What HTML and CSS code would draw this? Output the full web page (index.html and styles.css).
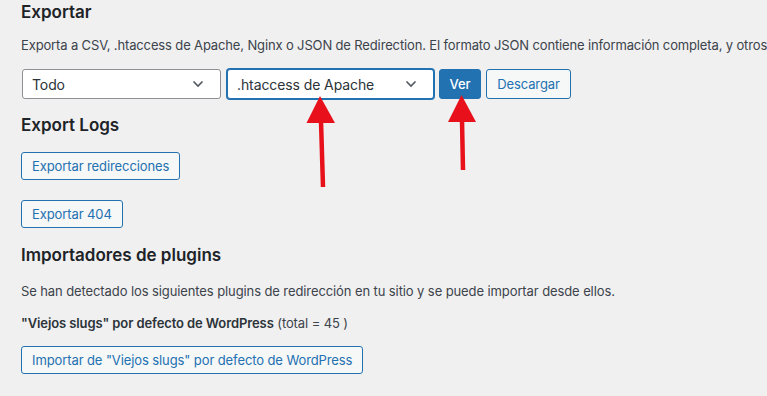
FILE: index.html
```html
<!DOCTYPE html>
<html lang="es">
<head>
    <meta charset="UTF-8">
    <meta name="viewport" content="width=device-width, initial-scale=1.0">
    <title>Redirection - Importar/Exportar</title>
    <link rel="stylesheet" href="styles.css">
</head>
<body>

    <div class="wrap">
        <h2 class="title-export">Exportar</h2>
        <p class="desc">Exporta a CSV, .htaccess de Apache, Nginx o JSON de Redirection. El formato JSON contiene información completa, y otros</p>

        <div class="export-row">
            <div class="select select-what">
                <span>Todo</span>
                <svg width="12" height="8" viewBox="0 0 12 8"><path d="M1.5 1.5 L6 6 L10.5 1.5" fill="none" stroke="#50575e" stroke-width="1.6"/></svg>
            </div>
            <div class="select select-format focused">
                <span>.htaccess de Apache</span>
                <svg width="12" height="8" viewBox="0 0 12 8"><path d="M1.5 1.5 L6 6 L10.5 1.5" fill="none" stroke="#50575e" stroke-width="1.6"/></svg>
            </div>
            <button class="button button-primary btn-ver">Ver</button>
            <button class="button btn-descargar">Descargar</button>
        </div>

        <h2 class="title-logs">Export Logs</h2>
        <button class="button btn-log">Exportar redirecciones</button>
        <button class="button btn-log btn-404">Exportar 404</button>

        <h2 class="title-import">Importadores de plugins</h2>
        <p class="detected">Se han detectado los siguientes plugins de redirección en tu sitio y se puede importar desde ellos.</p>
        <p class="plugin"><strong>"Viejos slugs" por defecto de WordPress</strong> (total = 45 )</p>
        <button class="button btn-import">Importar de "Viejos slugs" por defecto de WordPress</button>
    </div>

    <!-- flechas rojas encima de la captura -->
    <svg class="arrows" width="767" height="396" viewBox="0 0 767 396">
        <polygon points="320,96 306.5,123 335,123" fill="#e8111b"/>
        <line x1="321" y1="121" x2="323" y2="187" stroke="#e8111b" stroke-width="4.5"/>
        <polygon points="461.5,95 448,122 476,122" fill="#e8111b"/>
        <line x1="462" y1="120" x2="463" y2="170" stroke="#e8111b" stroke-width="4.5"/>
    </svg>

</body>
</html>
```

FILE: styles.css
```css
html, body {
    margin: 0;
    padding: 0;
}
body {
    background-color: #f0f0f1;
    font-family: Inter, "Noto Sans", Arial, sans-serif;
    color: #3c434a;
    font-size: 13px;
    letter-spacing: -0.1px;
    width: 767px;
    height: 396px;
    overflow: hidden;
    position: relative;
}
.wrap {
    padding-left: 21px;
}
h2 {
    font-size: 17px;
    font-weight: 600;
    color: #1d2327;
    line-height: 24px;
    margin: 0;
    letter-spacing: 0;
}
p {
    margin: 0;
    line-height: 20px;
    white-space: nowrap;
}
.desc {
    margin-top: 11px;
    letter-spacing: -0.14px;
}
.export-row {
    display: flex;
    align-items: center;
    gap: 5px;
    margin-top: 14px;
    margin-left: 1px;
    height: 30px;
}
.select {
    box-sizing: border-box;
    height: 30px;
    display: flex;
    align-items: center;
    justify-content: space-between;
    background-color: white;
    border: 1px solid #8c8f94;
    border-radius: 3px;
    padding: 0 16px 0 9px;
    font-size: 14px;
    color: #2c3338;
}
.select-what {
    width: 199px;
}
.select-format {
    width: 207px;
    margin-left: 1px;
}
.select.focused {
    border-color: #2271b1;
    box-shadow: 0 0 0 1px #2271b1;
}
.button {
    box-sizing: border-box;
    display: block;
    height: 28px;
    padding: 0 10px;
    font-family: inherit;
    font-size: 13px;
    letter-spacing: -0.1px;
    color: #2271b1;
    background-color: #f6f7f7;
    border: 1px solid #2271b1;
    border-radius: 3px;
    cursor: pointer;
}
.export-row .button {
    height: 30px;
}
.button-primary {
    background-color: #2271b1;
    color: white;
    font-weight: 500;
}
.btn-ver {
    width: 42px;
    padding: 0;
}
.btn-descargar {
    width: 85px;
    padding: 0;
}
.title-logs {
    margin-top: 14px;
}
.btn-log {
    margin-top: 15px;
}
.btn-404 {
    margin-top: 20px;
}
.title-import {
    margin-top: 15px;
}
.detected {
    margin-top: 14px;
}
.plugin {
    margin-top: 12px;
}
.plugin strong {
    font-weight: 600;
    color: #2c3338;
}
.btn-import {
    margin-top: 13px;
}
.arrows {
    position: absolute;
    top: 0;
    left: 0;
    pointer-events: none;
}
```
